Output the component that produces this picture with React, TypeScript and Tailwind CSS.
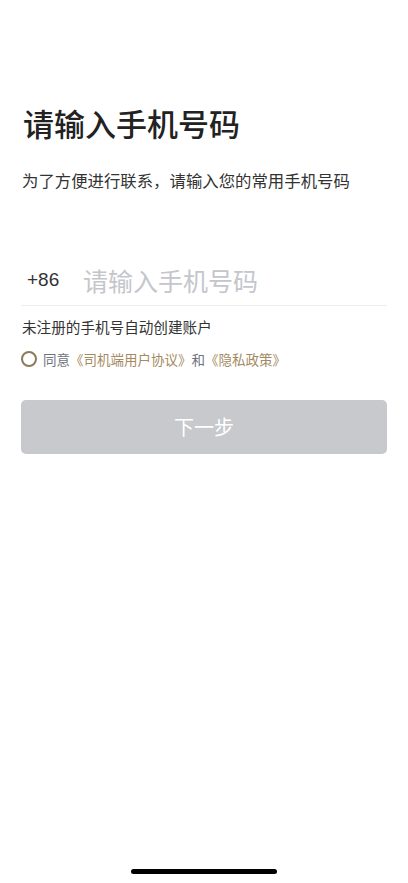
import React, { useState } from "react";

const font = { fontFamily: '"Noto Sans CJK SC", "Noto Sans", sans-serif' };

export default function App() {
  const [agreed, setAgreed] = useState(false);
  const [phone, setPhone] = useState("");

  return (
    <div className="relative flex h-[883px] w-[408px] flex-col bg-white px-[21px]" style={font}>
      <h1 className="mt-[101px] pl-[2px] text-[31px] font-medium leading-[44px] text-[#222]">
        请输入手机号码
      </h1>
      <p className="mt-[23px] pl-[1px] text-[16.4px] leading-[24px] text-[#333]">
        为了方便进行联系，请输入您的常用手机号码
      </p>

      <div className="mt-[64px] flex h-[50px] items-center border-b border-[#eeeeee]">
        <span className="w-[62px] pl-[6px] text-[19px] text-[#333]" style={{ fontFamily: '"Liberation Sans", sans-serif' }}>
          +86
        </span>
        <input
          value={phone}
          onChange={(e) => setPhone(e.target.value)}
          placeholder="请输入手机号码"
          className="min-w-0 flex-1 bg-transparent text-[25px] text-[#333] outline-none placeholder:text-[#c4c6cb]"
        />
      </div>

      <p className="mt-[11px] pl-[1px] text-[14.6px] leading-[20px] text-[#333]">未注册的手机号自动创建账户</p>

      <div className="mt-[12px] flex items-center gap-[6px]">
        <button
          onClick={() => setAgreed(!agreed)}
          className={`h-[16px] w-[16px] shrink-0 rounded-full border-2 border-[#8c7a58] ${agreed ? "bg-[#8c7a58]" : ""}`}
        />
        <span className="text-[13.5px] leading-[20px] text-[#6f7380]">
          同意<span className="text-[#a48b5f]">《司机端用户协议》</span>和
          <span className="text-[#a48b5f]">《隐私政策》</span>
        </span>
      </div>

      <button className="mt-[31px] flex h-[54px] w-full items-center justify-center rounded-[5px] bg-[#c8c9cc] text-[20px] text-white">
        下一步
      </button>

      <div className="absolute bottom-[9px] left-[131px] h-[5px] w-[146px] rounded-full bg-black" />
    </div>
  );
}
